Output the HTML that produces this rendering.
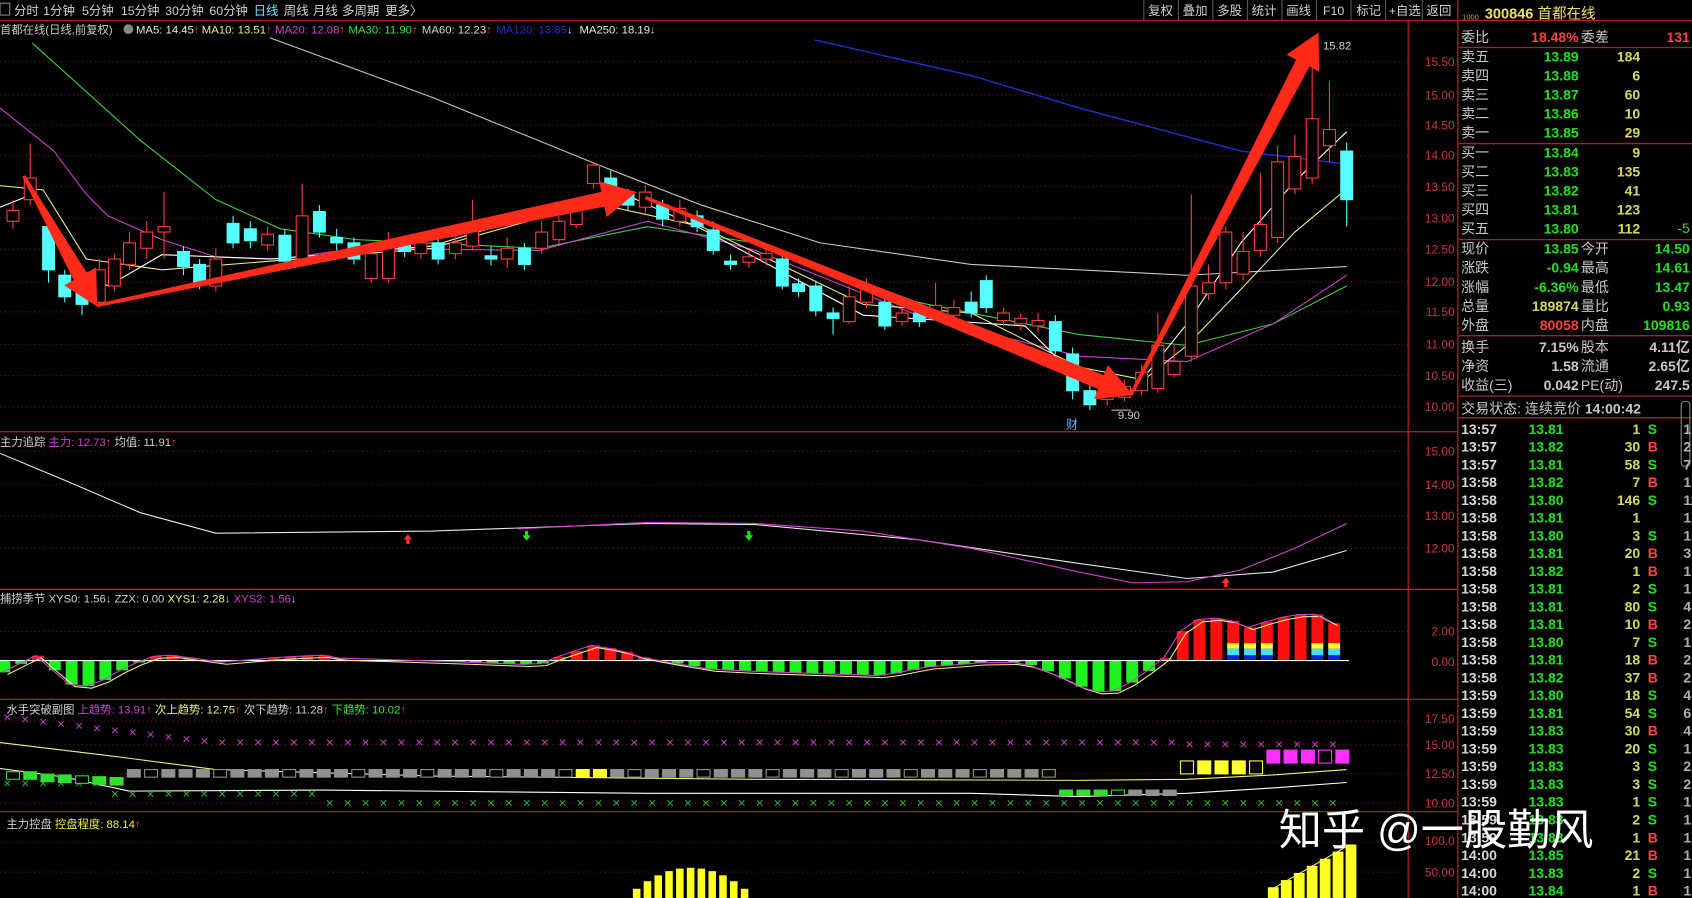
<!DOCTYPE html>
<html><head><meta charset="utf-8"><style>
html,body{margin:0;padding:0;background:#000;overflow:hidden}
svg{display:block}
text{font-family:"Liberation Sans","Noto Sans CJK SC",sans-serif}
</style></head><body>
<svg id="s" xmlns="http://www.w3.org/2000/svg" width="1692" height="898" viewBox="0 0 1568 832" preserveAspectRatio="none">
<rect width="1568" height="832" fill="#000"/>
<g id="grid" stroke="#7a1a1a" stroke-dasharray="1,3" stroke-width="1"></g>
<g id="chart"></g>
<g stroke="#b02020" stroke-width="1.2" fill="none">
<line x1="0" y1="19" x2="1352" y2="19"/>
<line x1="1305" y1="19" x2="1305" y2="832"/>
<line x1="1351" y1="0" x2="1351" y2="832"/>
<line x1="0" y1="400" x2="1351" y2="400"/>
<line x1="0" y1="546" x2="1351" y2="546"/>
<line x1="0" y1="648" x2="1351" y2="648"/>
<line x1="0" y1="752" x2="1351" y2="752"/>
<line x1="1352" y1="19" x2="1568" y2="19"/>
<line x1="1352" y1="44" x2="1568" y2="44"/>
<line x1="1352" y1="133" x2="1568" y2="133"/>
<line x1="1352" y1="222" x2="1568" y2="222"/>
<line x1="1352" y1="311" x2="1568" y2="311"/>
<line x1="1352" y1="367" x2="1568" y2="367"/>
<line x1="1352" y1="387" x2="1568" y2="387"/>
</g>
<g font-size="11.5" fill="#d0d0d0">
<rect x="0" y="3" width="9" height="11" fill="none" stroke="#888"/>
<text x="13" y="14">分时</text><text x="40" y="14">1分钟</text><text x="76" y="14">5分钟</text><text x="112" y="14">15分钟</text><text x="153" y="14">30分钟</text><text x="194" y="14">60分钟</text>
<text x="235" y="14" fill="#70e0ff">日线</text><text x="263" y="14">周线</text><text x="290" y="14">月线</text><text x="317" y="14">多周期</text><text x="357" y="14">更多〉</text>
<g stroke="#555"><line x1="1060" y1="0" x2="1060" y2="19"/><line x1="1092" y1="0" x2="1092" y2="19"/><line x1="1124" y1="0" x2="1124" y2="19"/><line x1="1156" y1="0" x2="1156" y2="19"/><line x1="1188" y1="0" x2="1188" y2="19"/><line x1="1220" y1="0" x2="1220" y2="19"/><line x1="1252" y1="0" x2="1252" y2="19"/><line x1="1284" y1="0" x2="1284" y2="19"/><line x1="1318" y1="0" x2="1318" y2="19"/></g>
<text x="1064" y="14">复权</text><text x="1096" y="14">叠加</text><text x="1128" y="14">多股</text><text x="1160" y="14">统计</text><text x="1192" y="14">画线</text><text x="1226" y="14">F10</text><text x="1257" y="14">标记</text><text x="1287" y="14">+自选</text><text x="1322" y="14">返回</text>
</g>
<g font-size="10.5">
<text x="0" y="31" fill="#c8c8c8">首都在线(日线,前复权)</text>
<circle cx="119" cy="27" r="4.5" fill="#888"/>
<text x="126" y="31" fill="#e8e8e8">MA5: 14.45<tspan fill="#ff4040">↑</tspan></text>
<text x="187" y="31" fill="#f0f080">MA10: 13.51<tspan fill="#ff4040">↑</tspan></text>
<text x="255" y="31" fill="#d040d0">MA20: 12.08<tspan fill="#ff4040">↑</tspan></text>
<text x="323" y="31" fill="#40e040">MA30: 11.90<tspan fill="#ff4040">↑</tspan></text>
<text x="391" y="31" fill="#d8d8d8">MA60: 12.23<tspan fill="#ff4040">↑</tspan></text>
<text x="460" y="31" fill="#2030d0">MA120: 13.85<tspan fill="#70e0ff">↓</tspan></text>
<text x="537" y="31" fill="#e8e8e8">MA250: 18.19<tspan fill="#70e0ff">↓</tspan></text>
<text x="1226" y="46" fill="#d0d0d0">15.82</text>
<text x="1036" y="388" fill="#d0d0d0">9.90</text>
<text x="988" y="397" fill="#70b0ff" font-size="11">财</text>
<text x="0" y="413" fill="#d0d0d0">主力追踪 <tspan fill="#d040d0">主力: 12.73</tspan><tspan fill="#ff4040">↑</tspan> 均值: 11.91<tspan fill="#ff4040">↑</tspan></text>
<text x="0" y="558" fill="#d0d0d0">捕捞季节 XYS0: 1.56<tspan fill="#70e0ff">↓</tspan>   ZZX: 0.00    <tspan fill="#f0f080">XYS1: 2.28</tspan><tspan fill="#70e0ff">↓</tspan> <tspan fill="#d040d0">XYS2: 1.56</tspan><tspan fill="#70e0ff">↓</tspan></text>
<text x="6" y="661" fill="#d0d0d0">水手突破副图 <tspan fill="#d040d0">上趋势: 13.91</tspan><tspan fill="#ff4040">↑</tspan> <tspan fill="#f0f080">次上趋势: 12.75</tspan><tspan fill="#ff4040">↑</tspan> 次下趋势: 11.28<tspan fill="#ff4040">↑</tspan> <tspan fill="#40e040">下趋势: 10.02</tspan><tspan fill="#ff4040">↑</tspan></text>
<text x="6" y="767" fill="#d0d0d0">主力控盘 <tspan fill="#f0f040">控盘程度: 88.14</tspan><tspan fill="#ff4040">↑</tspan></text>
</g>
<g font-size="11" fill="#c83a3a" text-anchor="end">
<text x="1348" y="61">15.50</text><text x="1348" y="92">15.00</text><text x="1348" y="120">14.50</text><text x="1348" y="148">14.00</text><text x="1348" y="177">13.50</text><text x="1348" y="206">13.00</text><text x="1348" y="235">12.50</text><text x="1348" y="265">12.00</text><text x="1348" y="293">11.50</text><text x="1348" y="323">11.00</text><text x="1348" y="352">10.50</text><text x="1348" y="381">10.00</text>
<text x="1348" y="422">15.00</text><text x="1348" y="453">14.00</text><text x="1348" y="482">13.00</text><text x="1348" y="512">12.00</text>
<text x="1348" y="589">2.00</text><text x="1348" y="617">0.00</text>
<text x="1348" y="670">17.50</text><text x="1348" y="694">15.00</text><text x="1348" y="721">12.50</text><text x="1348" y="748">10.00</text>
<text x="1348" y="783">100.0</text><text x="1348" y="812">50.00</text>
</g>
<g font-size="13" fill="#c8c8c8">
<text x="1355" y="18" font-size="7" fill="#c0a040">1000</text>
<text x="1376" y="17" fill="#f0e060" font-size="13.5" font-weight="bold">300846 <tspan font-weight="normal">首都在线</tspan></text>
<text x="1354" y="39">委比</text><text x="1463" y="39" fill="#ff4040" text-anchor="end" font-weight="bold">18.48%</text><text x="1465" y="39">委差</text><text x="1566" y="39" fill="#ff4040" text-anchor="end" font-weight="bold">131</text>
</g>
<g id="rp" font-size="13" font-weight="bold"></g>
<g font-size="13" fill="#c8c8c8">
<text x="1354" y="383">交易状态: 连续竞价 <tspan font-weight="bold">14:00:42</tspan></text>
</g>
<rect x="1558" y="372" width="8" height="60" rx="3" fill="none" stroke="#888"/>
<g id="ticks" font-size="13" font-weight="bold"></g>
<text x="1185" y="783" font-size="40" fill="#fff" font-family="Liberation Sans,Noto Sans CJK SC,sans-serif">知乎 @一股勤风</text>
</svg>
<script>
var NS="http://www.w3.org/2000/svg";
function el(p,t,a,txt){var e=document.createElementNS(NS,t);for(var k in a)e.setAttribute(k,a[k]);if(txt!=null)e.textContent=txt;p.appendChild(e);return e;}
var G=document.getElementById('grid'),C=document.getElementById('chart');
[57,88,116,144,173,202,231,261,289,319,348,377,418,449,478,508,585,668,690,717,744,780,808].forEach(function(y){el(G,'line',{x1:0,y1:y,x2:1305,y2:y});});
function pl(pts,col,w){el(C,'polyline',{points:pts.map(function(p){return p.join(',')}).join(' '),fill:'none',stroke:col,'stroke-width':w||1});}
pl([[250,35],[400,90],[560,155],[650,190],[760,225],[900,245],[1100,255],[1248,247]],'#c8c8c8');
pl([[755,37],[900,70],[1000,100],[1150,140],[1248,152]],'#2030d0',1.3);
pl([[30,40],[130,130],[200,185],[260,212],[330,222],[500,230],[600,210],[700,225],[850,280],[1000,310],[1100,320],[1180,300],[1248,265]],'#40d040');
pl([[0,100],[50,140],[80,180],[100,200],[150,222],[200,238],[260,240],[330,230],[500,232],[600,205],[700,232],[850,292],[1000,330],[1100,335],[1180,300],[1248,255]],'#d040d0');
pl([[0,172],[40,176],[80,240],[150,250],[250,242],[400,230],[550,188],[650,210],[800,282],[900,290],[1000,340],[1060,352],[1100,320],[1150,268],[1200,215],[1248,175]],'#f0f080');
pl([[0,192],[30,180],[60,240],[100,265],[150,236],[250,240],[400,228],[570,176],[650,212],[800,292],[950,302],[1000,352],[1050,362],[1100,300],[1150,225],[1200,168],[1248,122]],'#ffffff');
var cd=[[12,195,205,185,212,1],[28,165,185,133,190,1],[45,210,250,200,262,0],[60,255,275,250,280,0],[76,265,282,250,292,0],[92,250,280,240,285,1],[106,240,265,235,270,1],[120,225,245,215,250,1],[136,215,230,205,240,1],[152,210,215,178,240,1],[170,233,247,228,255,0],[185,245,262,240,268,0],[200,240,265,230,270,1],[216,207,225,200,230,0],[232,212,223,205,230,0],[248,217,227,210,232,1],[264,218,242,212,248,0],[280,200,240,170,245,1],[296,196,215,190,220,0],[312,220,225,212,232,0],[328,225,240,220,245,0],[344,235,258,230,262,1],[360,225,258,215,262,1],[375,225,233,218,238,0],[390,225,235,220,240,1],[406,225,240,220,245,0],[422,225,235,215,240,1],[438,212,228,185,232,1],[455,237,240,228,246,0],[470,230,240,220,248,1],[486,230,245,225,250,0],[502,215,230,205,235,1],[518,205,222,200,228,1],[534,190,208,185,212,1],[550,153,170,150,175,1],[566,165,175,158,180,0],[582,180,190,175,195,0],[598,178,192,172,198,1],[614,190,203,185,210,0],[630,193,205,185,210,1],[646,200,210,195,215,0],[661,213,232,205,236,0],[677,242,245,236,250,0],[694,238,243,232,248,1],[710,235,240,230,246,1],[725,240,265,235,268,0],[740,263,270,258,275,0],[756,265,288,260,293,0],[772,290,295,285,310,0],[787,275,298,265,300,1],[803,265,280,258,285,1],[820,280,302,275,306,0],[836,290,298,285,302,1],[852,290,298,284,303,0],[867,283,292,262,296,1],[884,285,292,278,297,1],[900,280,290,270,294,0],[914,260,285,255,290,0],[930,290,297,285,302,1],[946,295,300,290,306,1],[962,297,302,290,308,1],[978,298,325,292,328,0],[994,328,362,322,370,0],[1010,362,375,355,380,0],[1026,355,370,350,376,1],[1042,358,368,352,372,1],[1058,345,362,338,366,1],[1073,320,360,290,364,1],[1088,335,347,320,350,1],[1104,265,330,180,335,1],[1120,262,272,245,278,1],[1136,215,262,210,268,1],[1152,233,254,215,260,1],[1168,208,232,160,238,1],[1184,150,220,135,225,1],[1200,145,175,125,180,1],[1216,110,165,45,170,1],[1232,120,135,75,150,1],[1248,140,185,132,210,0]];
cd.forEach(function(c){var col=c[5]?'#ff3c3c':'#54ffff';
el(C,'line',{x1:c[0],y1:c[3],x2:c[0],y2:c[4],stroke:col});
el(C,'rect',{x:c[0]-5.5,y:c[1],width:11,height:Math.max(1,c[2]-c[1]),fill:c[5]?'#000':col,stroke:col});});
function arrow(x1,y1,x2,y2){var dx=x2-x1,dy=y2-y1,L=Math.hypot(dx,dy),ux=dx/L,uy=dy/L,nx=-uy,ny=ux,hl=32,hw=17,sw=7;
var bx=x2-ux*hl,by=y2-uy*hl;var P=[[x1+nx*1.5,y1+ny*1.5],[bx+nx*sw,by+ny*sw],[bx+nx*hw,by+ny*hw],[x2,y2],[bx-nx*hw,by-ny*hw],[bx-nx*sw,by-ny*sw],[x1-nx*1.5,y1-ny*1.5]];
el(C,'polygon',{points:P.map(function(p){return p.join(',')}).join(' '),fill:'#ff2a1a'});}
arrow(22,163,90,284);arrow(90,283,590,178);arrow(598,183,1050,366);arrow(1048,366,1222,30);
el(C,'line',{x1:1048,y1:380,x2:1030,y2:380,stroke:'#ccc'});
pl([[0,420],[60,445],[130,475],[200,494],[400,492],[600,485],[700,486],[850,500],[1000,522],[1100,536],[1180,530],[1248,510]],'#e8e8e8');
pl([[480,490],[600,484],[700,485],[800,492],[900,508],[1000,530],[1050,540],[1100,539],[1150,528],[1200,508],[1248,485]],'#d040d0');
[[378,500,'#ff3030'],[1136,540,'#ff3030']].forEach(function(a){el(C,'path',{d:'M'+(a[0]-4)+' '+a[1]+'l4 -5l4 5h-2.5v4h-3v-4z',fill:a[2]});});
[488,694].forEach(function(x){el(C,'path',{d:'M'+(x-4)+' 496l4 5l4 -5h-2.5v-4h-3v4z',fill:'#20e020'});});
var Z=612,bars=[];
function v2(x){var k=[[0,-12],[15,-8],[30,8],[45,-2],[60,-20],[75,-25],[90,-22],[105,-14],[120,-5],[150,6],[170,4],[200,-2],[260,3],[300,5],[330,0],[420,-1],[500,-4],[520,4],[550,14],[575,10],[600,2],[660,-8],[700,-10],[760,-12],[820,-14],[860,-6],[900,-3],[930,0],[960,-5],[990,-18],[1010,-28],[1030,-30],[1050,-20],[1070,-6],[1085,6],[1100,35],[1120,40],[1140,38],[1160,30],[1180,38],[1200,42],[1216,44],[1232,40],[1248,20]];
for(var i=1;i<k.length;i++){if(x<=k[i][0]){var a=k[i-1],b=k[i],q=(x-a[0])/(b[0]-a[0]);return a[1]+q*(b[1]-a[1]);}}return 20;}
for(var x=4;x<=1250;x+=15.6){var v=v2(x);if(Math.abs(v)<1)continue;
el(C,'rect',{x:x-5.5,y:v>0?Z-v:Z,width:11,height:Math.abs(v),fill:v>0?'#ff1010':'#20f020'});
if(x>1090&&v>30&&Math.round(x)%3!=2){el(C,'rect',{x:x-5.5,y:Z-16,width:11,height:5,fill:'#ffff30'});el(C,'rect',{x:x-5.5,y:Z-11,width:11,height:6,fill:'#40e0ff'});el(C,'rect',{x:x-5.5,y:Z-5,width:11,height:5,fill:'#1020e0'});}
bars.push([x,Z-v]);}
el(C,'line',{x1:0,y1:Z,x2:1250,y2:Z,stroke:'#fff'});
pl(bars.map(function(b){return [b[0]+3,b[1]+2]}),'#f0f080');pl(bars.map(function(b){return [b[0]-2,b[1]]}),'#d040d0');
pl([[0,688],[100,700],[200,713],[400,719],[700,722],[1000,723],[1100,722],[1180,718],[1248,713]],'#f0f080');
pl([[0,712],[60,720],[120,733],[300,732],[600,735],[900,735],[1000,738],[1100,735],[1180,730],[1248,725]],'#ffffff');
for(var x=8;x<1250;x+=16.6){var yu=x<200?668+x*0.12:692;if(x>1100)yu=694;el(C,'text',{x:x-5,y:yu,fill:'#c040c0','font-size':13},'×');
var yl=x<100?730:(x<300?740:748);el(C,'text',{x:x-5,y:yl,fill:'#30b030','font-size':13},'×');}
for(var x=12;x<1250;x+=16){var y=x<120?713:716;var col='#909090',h=7;
if(x<120){col='#30e030';y=718+(x>40?x*0.05:0);} if(x>=540&&x<560){col='#ffff30';} if(x>1090){col=x>1170?'#ff30ff':'#ffff30';y=x>1170?698:708;h=12;}
if(x>980&&x<1090){col=(x<1050)?'#30e030':'#909090';y=735;h=5;}
el(C,'rect',{x:x-6,y:y-3,width:12,height:h,fill:((x/16)|0)%4==0?'#000':col,stroke:col});}
for(var x=580;x<=700;x+=10){var tt=(x-640)/60,h=28*(1-tt*tt);el(C,'rect',{x:x-3.5,y:832-h,width:7,height:h,fill:'#ffff20'});}
for(var x=1180;x<=1252;x+=12){var h=10+(x-1180)*0.55;el(C,'rect',{x:x-5,y:832-h,width:10,height:h,fill:'#ffff20'});}
pl([[1175,826],[1250,783]],'#f0f080');
var R=document.getElementById('rp');
function tx(x,y,s,c,anc,bold){el(R,'text',{x:x,y:y,fill:c,'text-anchor':anc||'start','font-weight':bold===0?'normal':'bold'},s);}
var lab='#c8c8c8',gr='#20e020',ye='#d8d860',rd='#ff4040';
var ob=[['卖五','13.89','184'],['卖四','13.88','6'],['卖三','13.87','60'],['卖二','13.86','10'],['卖一','13.85','29'],['买一','13.84','9'],['买二','13.83','135'],['买三','13.82','41'],['买四','13.81','123'],['买五','13.80','112']];
ob.forEach(function(o,i){var y=i<5?57+i*17.6:146+(i-5)*17.6;tx(1354,y,o[0],lab,'start',0);tx(1463,y,o[1],gr,'end');tx(1520,y,o[2],ye,'end');});
tx(1566,216,'-5',gr,'end',0);
var inf=[['现价','13.85',gr,'今开','14.50',gr],['涨跌','-0.94',gr,'最高','14.61',gr],['涨幅','-6.36%',gr,'最低','13.47',gr],['总量','189874',ye,'量比','0.93',gr],['外盘','80058',rd,'内盘','109816',gr]];
inf.forEach(function(o,i){var y=235+i*17.7;tx(1354,y,o[0],lab,'start',0);tx(1463,y,o[1],o[2],'end');tx(1465,y,o[3],lab,'start',0);tx(1566,y,o[4],o[5],'end');});
var inf2=[['换手','7.15%','股本','4.11亿'],['净资','1.58','流通','2.65亿'],['收益(三)','0.042','PE(动)','247.5']];
inf2.forEach(function(o,i){var y=326+i*17.7;tx(1354,y,o[0],lab,'start',0);tx(1463,y,o[1],lab,'end');tx(1465,y,o[2],lab,'start',0);tx(1566,y,o[3],lab,'end');});
var T=document.getElementById('ticks');
var tk=[['13:57','13.81','1','S',1],['13:57','13.82','30','B',2],['13:57','13.81','58','S',7],['13:58','13.82','7','B',1],['13:58','13.80','146','S',11],['13:58','13.81','1','',1],['13:58','13.80','3','S',1],['13:58','13.81','20','B',3],['13:58','13.82','1','B',1],['13:58','13.81','2','S',1],['13:58','13.81','80','S',4],['13:58','13.81','10','B',2],['13:58','13.80','7','S',1],['13:58','13.81','18','B',2],['13:58','13.82','37','B',2],['13:59','13.80','18','S',4],['13:59','13.81','54','S',6],['13:59','13.83','30','B',4],['13:59','13.83','20','S',1],['13:59','13.83','3','S',2],['13:59','13.83','3','S',2],['13:59','13.83','1','S',1],['13:59','13.83','2','S',1],['13:59','13.83','1','B',1],['14:00','13.85','21','B',1],['14:00','13.83','2','S',1],['14:00','13.84','1','B',1]];
tk.forEach(function(o,i){var y=402+i*16.45;
el(T,'text',{x:1354,y:y,fill:'#d8d8d8'},o[0]);el(T,'text',{x:1449,y:y,fill:gr,'text-anchor':'end'},o[1]);
el(T,'text',{x:1520,y:y,fill:ye,'text-anchor':'end'},o[2]);el(T,'text',{x:1527,y:y,fill:o[3]=='B'?rd:gr},o[3]);
el(T,'text',{x:1560,y:y,fill:'#b0b0b0'},String(o[4]));});
</script>
</body></html>
